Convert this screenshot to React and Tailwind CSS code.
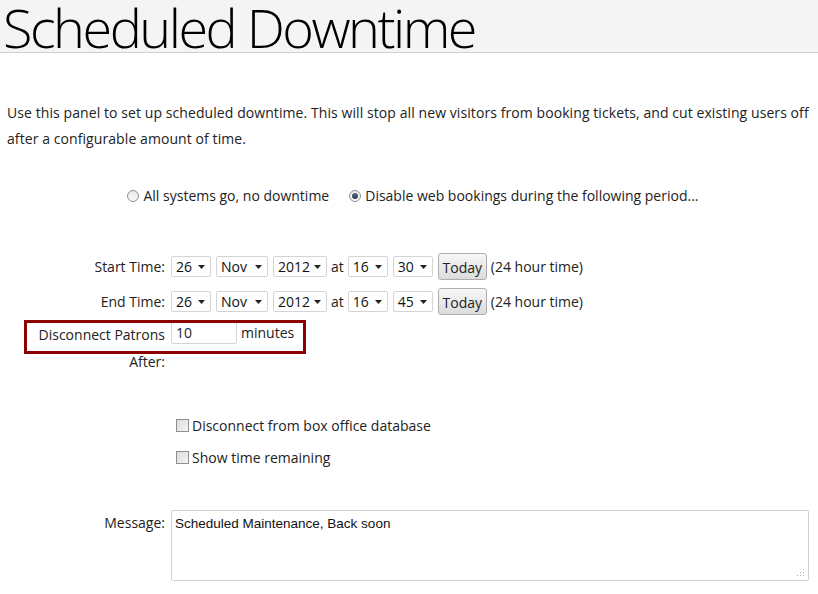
import React from "react";

const FONT = { fontFamily: "'Open Sans', 'Noto Sans', sans-serif" };

function Caret() {
  return (
    <svg width="7" height="4" viewBox="0 0 7 4">
      <path d="M0 0h7L3.5 4z" fill="#222" />
    </svg>
  );
}

function Select({ value, w }) {
  return (
    <div
      className={`flex items-center justify-between h-[21px] ${w} border border-[#d4d4d4] rounded-[2px] bg-white pl-[4px] pr-[5px] text-[14px] text-[#111]`}
    >
      <span>{value}</span>
      <Caret />
    </div>
  );
}

function TodayButton() {
  return (
    <button className="h-[27px] w-[49px] border border-[#adadad] rounded-[3px] bg-gradient-to-b from-[#f7f7f7] to-[#dcdcdc] text-[14px] text-[#222] flex items-center justify-center pt-[2px]">
      Today
    </button>
  );
}

function TimeRow({ label, min }) {
  return (
    <>
      <div className="text-right text-[14px] text-[#222] leading-[35px]">{label}</div>
      <div className="flex items-center gap-[5px] h-[35px] text-[14px] text-[#222]">
        <Select value="26" w="w-[40px]" />
        <Select value="Nov" w="w-[52px]" />
        <Select value="2012" w="w-[54px]" />
        <span className="-mx-[1px]">at</span>
        <Select value="16" w="w-[40px]" />
        <Select value={min} w="w-[40px]" />
        <TodayButton />
        <span className="-ml-[1px]">(24 hour time)</span>
      </div>
    </>
  );
}

function Radio({ checked }) {
  return (
    <span className="w-[12px] h-[12px] rounded-full border border-[#8f8f8f] bg-gradient-to-b from-[#e8e8e8] to-[#fafafa] flex items-center justify-center">
      {checked && (
        <span className="w-[6px] h-[6px] rounded-full bg-gradient-to-b from-[#5b6d80] to-[#1f3b57]" />
      )}
    </span>
  );
}

function Checkbox({ label }) {
  return (
    <div className="flex items-center gap-[3px] pl-[5px] text-[14px] text-[#222]">
      <span className="w-[13px] h-[13px] border border-[#8f8f8f] bg-gradient-to-br from-[#dcdcdc] to-[#f4f4f4]" />
      <span>{label}</span>
    </div>
  );
}

export default function App() {
  return (
    <div className="relative w-[818px] h-[594px] bg-white overflow-hidden" style={FONT}>
      {/* header */}
      <div className="h-[53px] bg-[#f4f4f4] border-b border-[#cfcfcf] pl-[3px]">
        <h1 className="text-[54px] font-light leading-[54px] text-black tracking-[-2.5px]">
          Scheduled Downtime
        </h1>
      </div>

      <p className="mt-[47px] px-[7px] text-[14px] leading-[26px] text-[#222] tracking-[0.08px]">
        Use this panel to set up scheduled downtime. This will stop all new visitors from booking
        tickets, and cut existing users off after a configurable amount of time.
      </p>

      <div className="mt-[33px] flex justify-center items-center text-[14px] text-[#222] pl-[8px]">
        <label className="flex items-center gap-[4px]">
          <Radio />
          All systems go, no downtime
        </label>
        <label className="flex items-center gap-[4px] ml-[20px]">
          <Radio checked />
          Disable web bookings during the following period...
        </label>
      </div>

      {/* form */}
      <div className="mt-[43px] ml-[38px] grid grid-cols-[127px_1fr] gap-x-[6px]">
        <TimeRow label="Start Time:" min="30" />
        <TimeRow label="End Time:" min="45" />

        <div className="text-right text-[14px] text-[#222] leading-[27px] pt-[2px]">
          Disconnect Patrons After:
        </div>
        <div className="flex items-start gap-[4px] pt-[3px] text-[14px] text-[#222]">
          <div className="h-[22px] w-[66px] border border-[#d4d4d4] rounded-[2px] bg-white pl-[4px] leading-[20px]">
            10
          </div>
          <span className="leading-[22px]">minutes</span>
        </div>

        <div className="col-span-2 h-[40px]" />

        <div />
        <div className="flex flex-col gap-[11px]">
          <Checkbox label="Disconnect from box office database" />
          <Checkbox label="Show time remaining" />
        </div>

        <div className="col-span-2 h-[42px]" />

        <div className="text-right text-[14px] text-[#222] leading-[26px]">Message:</div>
        <div
          className="relative w-[638px] h-[71px] border border-[#d0d0d0] rounded-[2px] px-[3px] pt-[3px] text-[13.5px] text-[#111]"
          style={{ fontFamily: "'Liberation Sans', Arial, sans-serif" }}
        >
          Scheduled Maintenance, Back soon
          <svg className="absolute right-[3px] bottom-[3px]" width="8" height="8" viewBox="0 0 8 8">
            <g fill="#b0b0b0">
              <rect x="6" y="0" width="1" height="1" />
              <rect x="6" y="3" width="1" height="1" />
              <rect x="3" y="3" width="1" height="1" />
              <rect x="6" y="6" width="1" height="1" />
              <rect x="3" y="6" width="1" height="1" />
              <rect x="0" y="6" width="1" height="1" />
            </g>
          </svg>
        </div>
      </div>

      {/* annotation box */}
      <div className="absolute left-[24px] top-[320px] w-[282px] h-[34px] border-[3px] border-[#8b0000]" />
    </div>
  );
}
